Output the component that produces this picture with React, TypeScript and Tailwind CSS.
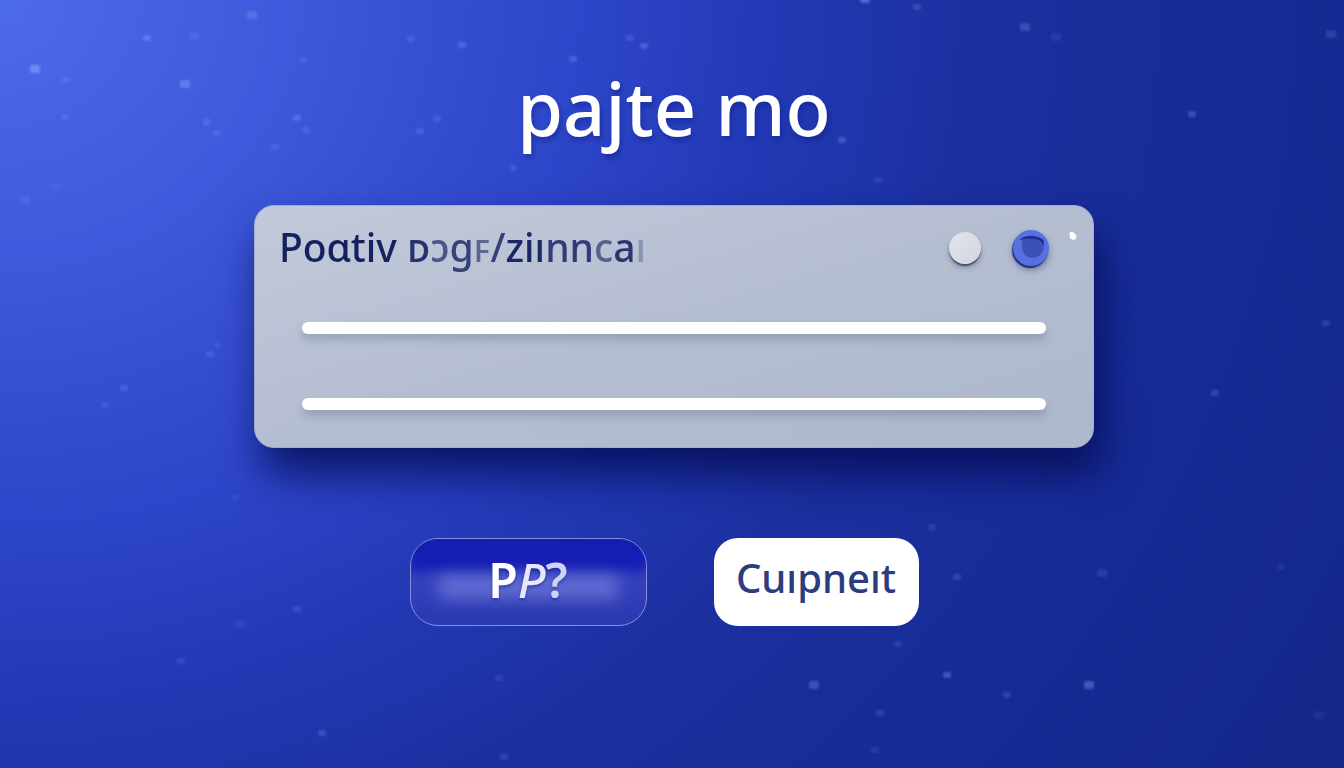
import React from 'react';

interface Speck {
  x: number;
  y: number;
  r: number;
  o: number;
}

const specks: Speck[] = [
  { x: 35, y: 69, r: 5, o: 0.45 },
  { x: 66, y: 80, r: 4, o: 0.15 },
  { x: 147, y: 38, r: 4, o: 0.3 },
  { x: 194, y: 36, r: 5, o: 0.1 },
  { x: 252, y: 15, r: 5, o: 0.25 },
  { x: 185, y: 84, r: 5, o: 0.35 },
  { x: 65, y: 117, r: 4, o: 0.14 },
  { x: 207, y: 122, r: 4, o: 0.2 },
  { x: 217, y: 133, r: 4, o: 0.15 },
  { x: 297, y: 118, r: 4, o: 0.24 },
  { x: 306, y: 130, r: 4, o: 0.16 },
  { x: 275, y: 147, r: 4, o: 0.18 },
  { x: 303, y: 60, r: 4, o: 0.12 },
  { x: 411, y: 39, r: 4, o: 0.16 },
  { x: 420, y: 131, r: 4, o: 0.18 },
  { x: 437, y: 119, r: 4, o: 0.16 },
  { x: 462, y: 45, r: 4, o: 0.24 },
  { x: 573, y: 59, r: 4, o: 0.24 },
  { x: 630, y: 38, r: 4, o: 0.18 },
  { x: 644, y: 46, r: 4, o: 0.28 },
  { x: 513, y: 168, r: 4, o: 0.18 },
  { x: 25, y: 200, r: 5, o: 0.14 },
  { x: 56, y: 187, r: 4, o: 0.1 },
  { x: 865, y: -1, r: 5, o: 0.4 },
  { x: 917, y: 7, r: 4, o: 0.2 },
  { x: 842, y: 140, r: 4, o: 0.25 },
  { x: 878, y: 180, r: 4, o: 0.12 },
  { x: 1025, y: 27, r: 5, o: 0.24 },
  { x: 1056, y: 37, r: 5, o: 0.1 },
  { x: 1192, y: 114, r: 4, o: 0.26 },
  { x: 1331, y: 34, r: 5, o: 0.16 },
  { x: 1326, y: 323, r: 4, o: 0.16 },
  { x: 1215, y: 393, r: 4, o: 0.2 },
  { x: 217, y: 345, r: 3, o: 0.18 },
  { x: 210, y: 354, r: 4, o: 0.18 },
  { x: 124, y: 388, r: 4, o: 0.18 },
  { x: 105, y: 405, r: 4, o: 0.12 },
  { x: 235, y: 497, r: 4, o: 0.1 },
  { x: 932, y: 527, r: 4, o: 0.14 },
  { x: 957, y: 577, r: 4, o: 0.18 },
  { x: 1102, y: 573, r: 5, o: 0.14 },
  { x: 1281, y: 567, r: 4, o: 0.1 },
  { x: 297, y: 609, r: 4, o: 0.16 },
  { x: 240, y: 624, r: 5, o: 0.1 },
  { x: 181, y: 661, r: 4, o: 0.14 },
  { x: 499, y: 678, r: 4, o: 0.14 },
  { x: 898, y: 644, r: 4, o: 0.14 },
  { x: 814, y: 685, r: 5, o: 0.26 },
  { x: 947, y: 675, r: 4, o: 0.3 },
  { x: 1007, y: 695, r: 4, o: 0.18 },
  { x: 1089, y: 685, r: 5, o: 0.33 },
  { x: 880, y: 713, r: 4, o: 0.16 },
  { x: 322, y: 733, r: 4, o: 0.22 },
  { x: 504, y: 757, r: 4, o: 0.16 },
  { x: 875, y: 750, r: 4, o: 0.12 },
  { x: 1319, y: 715, r: 5, o: 0.08 },
];

function Specks() {
  return (
    <svg
      className="pointer-events-none absolute inset-0 h-full w-full"
      viewBox="0 0 1344 768"
      preserveAspectRatio="xMidYMid slice"
      aria-hidden="true"
    >
      <defs>
        <filter id="soften">
          <feGaussianBlur stdDeviation="0.8" />
        </filter>
      </defs>
      <g fill="#9db4ff" filter="url(#soften)">
        {specks.map((s, i) => (
          <rect key={i} x={s.x - s.r} y={s.y - s.r + 1} width={s.r * 2} height={s.r * 2 - 2} rx={2} opacity={s.o} />
        ))}
      </g>
    </svg>
  );
}

function Card() {
  return (
    <section className="w-full rounded-[20px] border border-[#a3adc6] bg-linear-to-br from-[#c2c9da] via-[#b5bdd1] to-[#adb8cc] pb-[37px] shadow-[8px_26px_40px_0px_rgba(4,10,80,0.8)]">
      <div className="flex h-[84px] items-center justify-between pr-4 pl-6">
        <h2 className="whitespace-nowrap pb-1 text-[39px] leading-none font-medium text-[#14215f]">
          Poɑtiv <span className="text-[#26336f]">ᴅ</span>
          <span className="text-[#4a5688]">ɔ</span>
          <span className="text-[#35417a]">g</span>
          <span className="text-[#5a6692]">ꜰ</span>
          <span className="text-[#35417a]">/</span>
          <span className="text-[#1b2866]">ziı</span>
          <span className="text-[#303c77]">nn</span>
          <span className="text-[#56618e]">c</span>
          <span className="text-[#2a3670]">a</span>
          <span className="text-[#8a93b0]">ı</span>
        </h2>
        <div className="flex items-center">
          <button
            aria-label="Off"
            className="mr-8 h-8 w-8 rounded-full bg-linear-to-br from-[#e2e4ea] to-[#d3d6df] shadow-[0_2px_1px_#4b536c,0_4px_5px_rgba(60,70,100,0.4)]"
          />
          <button
            aria-label="On"
            className="mr-5 flex h-9 w-9 items-center justify-center rounded-full bg-[#5672e2] shadow-[-1px_2px_1px_#1e2f83,0_4px_6px_rgba(50,60,100,0.5)]"
          >
            <svg viewBox="0 0 36 36" className="h-9 w-9" aria-hidden="true">
              <path d="M9 9 Q19 5 30 9 Q33 20 26 26 Q19 30 13 26 Q8 22 9 9 Z" fill="#3c50b8" />
              <path d="M6 10 Q12 5 21 6 Q28 7 31 11 Q31 14 30 15 Q29 10 22 9 Q13 8 6 10 Z" fill="#1d2f98" />
            </svg>
          </button>
          <svg viewBox="0 0 8 10" className="mb-6 h-[10px] w-2" aria-hidden="true">
            <path d="M1 1 Q4 0 7 4 Q8 8 5 9 Q3 9 1 7 Q0 4 1 1 Z" fill="#fff" />
          </svg>
        </div>
      </div>
      <div className="mt-8 flex flex-col gap-16 px-[47px]">
        <div className="h-3 rounded-full bg-white shadow-[0_6px_8px_rgba(90,105,140,0.35)]" />
        <div className="h-3 rounded-full bg-white shadow-[0_6px_8px_rgba(90,105,140,0.35)]" />
      </div>
    </section>
  );
}

export default function App() {
  return (
    <main className="relative min-h-screen overflow-hidden bg-[radial-gradient(1550px_1400px_at_0%_0%,#4e6bea_0%,#3f5adc_18%,#2d45c8_38%,#2239b5_50%,#1b309f_63%,#172b96_80%,#15278a_100%)] pl-1 font-['Noto_Sans','Open_Sans',sans-serif]">
      <Specks />
      <div className="relative mx-auto flex w-full max-w-[840px] flex-col items-center pt-[58px]">
        <h1 className="h-[147px] whitespace-nowrap text-[74px] leading-[100px] font-medium text-white [text-shadow:2px_4px_5px_rgba(10,25,120,0.4)]">
          pajte mo
        </h1>
        <Card />
        <div className="mt-[90px] flex items-center gap-[67px] pr-5">
          <button className="relative h-[88px] w-[237px] overflow-hidden rounded-[28px] border border-[#8792dc] bg-linear-to-b from-[#151cac] from-0% via-[#3540bf] via-50% to-[#2c38ac] to-100% pb-1 text-[48px] leading-none font-semibold text-white [text-shadow:0_2px_3px_rgba(20,30,130,0.5)]">
            <span className="absolute inset-x-0 top-0 h-[30px] bg-[#161db3] blur-[4px]" />
            <span className="absolute inset-x-7 top-9 h-6 bg-[#7480db]/70 blur-[8px]" />
            <span className="relative">
              P<span className="font-medium text-[#e6e8fb] italic">P</span>
              <span className="text-[#cfd3f5]">?</span>
            </span>
          </button>
          <button className="h-[88px] w-[205px] rounded-[24px] bg-white pb-2 text-[40px] leading-none font-medium text-[#2c3c7d]">
            Cuıpneıt
          </button>
        </div>
      </div>
    </main>
  );
}
